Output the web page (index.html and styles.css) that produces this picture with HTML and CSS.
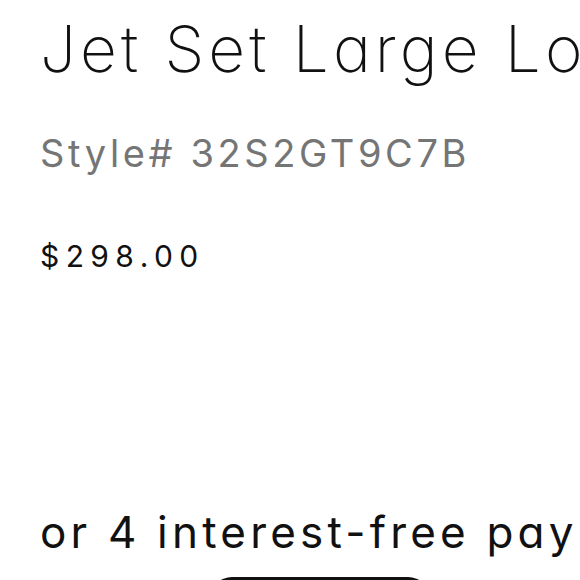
FILE: index.html
```html
<!DOCTYPE html>
<html>
<head>
<meta charset="utf-8">
<link rel="stylesheet" href="styles.css">
</head>
<body>
<main class="product">
  <h1 class="title">Jet Set Large Logo Tote Bag</h1>
  <p class="style">Style# 32S2GT9C7B</p>
  <p class="price">$298.00</p>
  <p class="pay">or 4 interest-free payments of $74.50</p>
  <div class="badge"></div>
</main>
</body>
</html>
```

FILE: styles.css
```css
html, body {
  margin: 0;
  padding: 0;
  background: #ffffff;
  overflow: hidden;
}
.product {
  width: 580px;
  height: 580px;
  overflow: hidden;
  padding: 9px 0 0 40px;
  box-sizing: border-box;
  font-family: Inter, "Noto Sans", sans-serif;
  font-feature-settings: "cv11" 1;
  color: #111;
  white-space: nowrap;
}
.title {
  margin: 0;
  font-size: 64px;
  line-height: 80px;
  font-weight: 250;
  letter-spacing: 4.1px;
}
.style {
  margin: 40px 0 0;
  font-size: 38px;
  line-height: 48px;
  font-weight: 400;
  color: #757575;
  letter-spacing: 3.6px;
}
.price {
  margin: 61px 0 0;
  font-size: 30px;
  line-height: 36px;
  font-weight: 400;
  letter-spacing: 6.4px;
}
.pay {
  margin: 230px 0 0;
  font-size: 44px;
  line-height: 56px;
  font-weight: 400;
  letter-spacing: 4.2px;
}
.badge {
  margin: 17px 0 0 170px;
  width: 220px;
  height: 44px;
  border-radius: 22px;
  background: #111;
}
```
